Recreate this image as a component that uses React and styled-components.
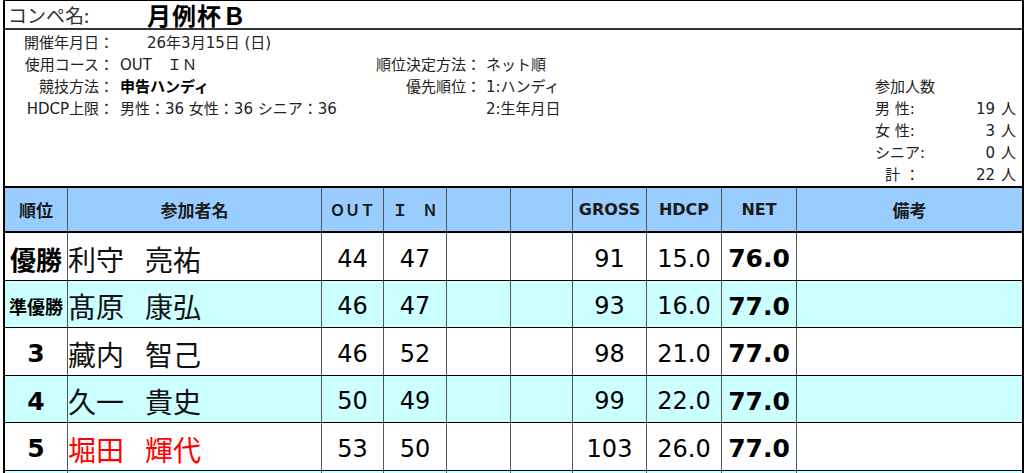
import React from 'react';
import styled, { createGlobalStyle } from 'styled-components';

const GlobalStyle = createGlobalStyle`
  html, body { margin: 0; padding: 0; background: #fff; }
  body {
    font-family: "DejaVu Sans", "Noto Sans CJK JP", sans-serif;
    color: #000;
  }
  * { box-sizing: border-box; }
`;

const JP = `"Noto Sans CJK JP", sans-serif`;
const LATIN = `"DejaVu Sans", "Noto Sans CJK JP", sans-serif`;

const Sheet = styled.div`
  margin-left: 3px;
  width: 1021px;
  border-left: 2px solid #000;
  border-right: 2px solid #000;
  border-top: 1px solid #000;
`;

const TitleRow = styled.div`
  display: flex;
  align-items: center;
  height: 29px;
  padding-top: 1px;
  border-bottom: 2px solid #333;
`;

const CompLabel = styled.div`
  width: 142px;
  padding-left: 3px;
  font-family: ${JP};
  font-size: 19px;
  line-height: 1.2;
  color: #333;
`;

const CompName = styled.div`
  font-family: ${JP};
  font-size: 24px;
  font-weight: 700;
  line-height: 1.1;
  letter-spacing: 1px;
  color: #000;
`;

const InfoGrid = styled.div`
  display: grid;
  grid-template-columns: 109px 234px 133px 1fr 152px;
  grid-template-rows: repeat(7, 22px);
  padding-top: 2px;
  height: 156px;
  font-size: 15px;
  line-height: 22px;
  color: #222;
`;

const Label = styled.div`
  grid-column: ${p => p.$col};
  grid-row: ${p => p.$row};
  text-align: right;
  white-space: nowrap;
`;

const Value = styled.div`
  grid-column: ${p => p.$col};
  grid-row: ${p => p.$row};
  padding-left: ${p => p.$pad || 6}px;
  white-space: nowrap;
  font-weight: ${p => (p.$bold ? 700 : 400)};
  color: ${p => (p.$bold ? '#000' : 'inherit')};
`;

const Count = styled.div`
  grid-column: 5;
  grid-row: 3 / span 5;
  display: grid;
  grid-template-columns: 66px 1fr 21px;
  grid-template-rows: repeat(5, 22px);
  padding-left: 5px;
  padding-right: 6px;
`;

const CountTitle = styled.div`
  grid-column: 1 / span 3;
`;

const CountLabel = styled.div`
  padding-left: ${p => p.$indent || 0}px;
  white-space: pre;
`;

const CountNum = styled.div`
  text-align: right;
`;

const CountUnit = styled.div`
  text-align: right;
`;

const COLS = '62px 254px 62px 63px 64px 62px 74px 75px 75px 226px';

const Row = styled.div`
  display: grid;
  grid-template-columns: ${COLS};
  height: ${p => p.$h}px;
  background: ${p => p.$bg};
  border-bottom: 1px solid #000;
`;

const HeadRow = styled(Row)`
  border-top: 2px solid #000;
  border-bottom: 2px solid #000;
`;

const Cell = styled.div`
  display: flex;
  align-items: center;
  justify-content: ${p => p.$align || 'center'};
  padding-top: ${p => p.$shift || 0}px;
  overflow: hidden;
  white-space: nowrap;
  & + & { border-left: 1px solid #555; }
`;

const HeadText = styled.span`
  font-family: ${p => (p.$latin ? LATIN : JP)};
  font-size: ${p => p.$size}px;
  font-weight: 700;
  color: #1a1a1a;
`;

const Rank = styled.span`
  font-family: ${p => (p.$latin ? LATIN : JP)};
  font-size: ${p => p.$size}px;
  font-weight: 700;
  color: #000;
`;

const Name = styled.div`
  display: flex;
  gap: 21px;
  font-family: ${JP};
  font-size: 28px;
  color: ${p => (p.$red ? '#ff0000' : '#111')};
`;

const Num = styled.span`
  font-family: ${LATIN};
  font-size: ${p => (p.$bold ? 25 : 24)}px;
  font-weight: ${p => (p.$bold ? 700 : 400)};
  color: #000;
`;

const WHITE = '#ffffff';
const CYAN = '#ccffff';
const S = 4;

const rows = [
  { rank: '優勝', rs: 26, name: ['利守', '亮祐'], out: 44, in: 47, gross: 91, hdcp: '15.0', net: '76.0', bg: WHITE, h: 48 },
  { rank: '準優勝', rs: 18, name: ['髙原', '康弘'], out: 46, in: 47, gross: 93, hdcp: '16.0', net: '77.0', bg: CYAN, h: 47 },
  { rank: '3', latin: true, rs: 25, name: ['藏内', '智己'], out: 46, in: 52, gross: 98, hdcp: '21.0', net: '77.0', bg: WHITE, h: 48 },
  { rank: '4', latin: true, rs: 25, name: ['久一', '貴史'], out: 50, in: 49, gross: 99, hdcp: '22.0', net: '77.0', bg: CYAN, h: 47 },
  { rank: '5', latin: true, rs: 25, name: ['堀田', '輝代'], red: true, out: 53, in: 50, gross: 103, hdcp: '26.0', net: '77.0', bg: WHITE, h: 48 },
];

const counts = [
  { label: '男 性:', n: 19 },
  { label: '女 性:', n: 3 },
  { label: 'シニア:', n: 0 },
  { label: '計 ：', n: 22, indent: 10 },
];

export default function App() {
  return (
    <>
      <GlobalStyle />
      <Sheet>
        <TitleRow>
          <CompLabel>コンペ名:</CompLabel>
          <CompName>月例杯Ｂ</CompName>
        </TitleRow>

        <InfoGrid>
          <Label $col={1} $row={1}>開催年月日：</Label>
          <Value $col={2} $row={1} $pad={33}>26年3月15日 (日)</Value>

          <Label $col={1} $row={2}>使用コース：</Label>
          <Value $col={2} $row={2}>OUT　ＩＮ</Value>
          <Label $col={3} $row={2}>順位決定方法：</Label>
          <Value $col={4} $row={2} $pad={5}>ネット順</Value>

          <Label $col={1} $row={3}>競技方法：</Label>
          <Value $col={2} $row={3} $bold>申告ハンディ</Value>
          <Label $col={3} $row={3}>優先順位：</Label>
          <Value $col={4} $row={3} $pad={5}>1:ハンディ</Value>

          <Label $col={1} $row={4}>HDCP上限：</Label>
          <Value $col={2} $row={4}>男性：36 女性：36 シニア：36</Value>
          <Value $col={4} $row={4} $pad={5}>2:生年月日</Value>

          <Count>
            <CountTitle>参加人数</CountTitle>
            {counts.map(c => (
              <React.Fragment key={c.label}>
                <CountLabel $indent={c.indent}>{c.label}</CountLabel>
                <CountNum>{c.n}</CountNum>
                <CountUnit>人</CountUnit>
              </React.Fragment>
            ))}
          </Count>
        </InfoGrid>

        <HeadRow $h={47} $bg="#99ccff">
          <Cell><HeadText $size={17}>順位</HeadText></Cell>
          <Cell><HeadText $size={17}>参加者名</HeadText></Cell>
          <Cell><HeadText $size={15}>ＯＵＴ</HeadText></Cell>
          <Cell><HeadText $size={15}>Ｉ　Ｎ</HeadText></Cell>
          <Cell />
          <Cell />
          <Cell><HeadText $latin $size={16}>GROSS</HeadText></Cell>
          <Cell><HeadText $latin $size={16}>HDCP</HeadText></Cell>
          <Cell><HeadText $latin $size={16}>NET</HeadText></Cell>
          <Cell><HeadText $size={17}>備考</HeadText></Cell>
        </HeadRow>

        {rows.map((r, i) => (
          <Row key={i} $h={r.h} $bg={r.bg}>
            <Cell $shift={S}><Rank $latin={r.latin} $size={r.rs}>{r.rank}</Rank></Cell>
            <Cell $shift={S} $align="flex-start">
              <Name $red={r.red}><span>{r.name[0]}</span><span>{r.name[1]}</span></Name>
            </Cell>
            <Cell $shift={S}><Num>{r.out}</Num></Cell>
            <Cell $shift={S}><Num>{r.in}</Num></Cell>
            <Cell />
            <Cell />
            <Cell $shift={S}><Num>{r.gross}</Num></Cell>
            <Cell $shift={S}><Num>{r.hdcp}</Num></Cell>
            <Cell $shift={S}><Num $bold>{r.net}</Num></Cell>
            <Cell />
          </Row>
        ))}
        <Row $h={47} $bg={CYAN}>
          <Cell /><Cell /><Cell /><Cell /><Cell /><Cell /><Cell /><Cell /><Cell /><Cell />
        </Row>
      </Sheet>
    </>
  );
}
